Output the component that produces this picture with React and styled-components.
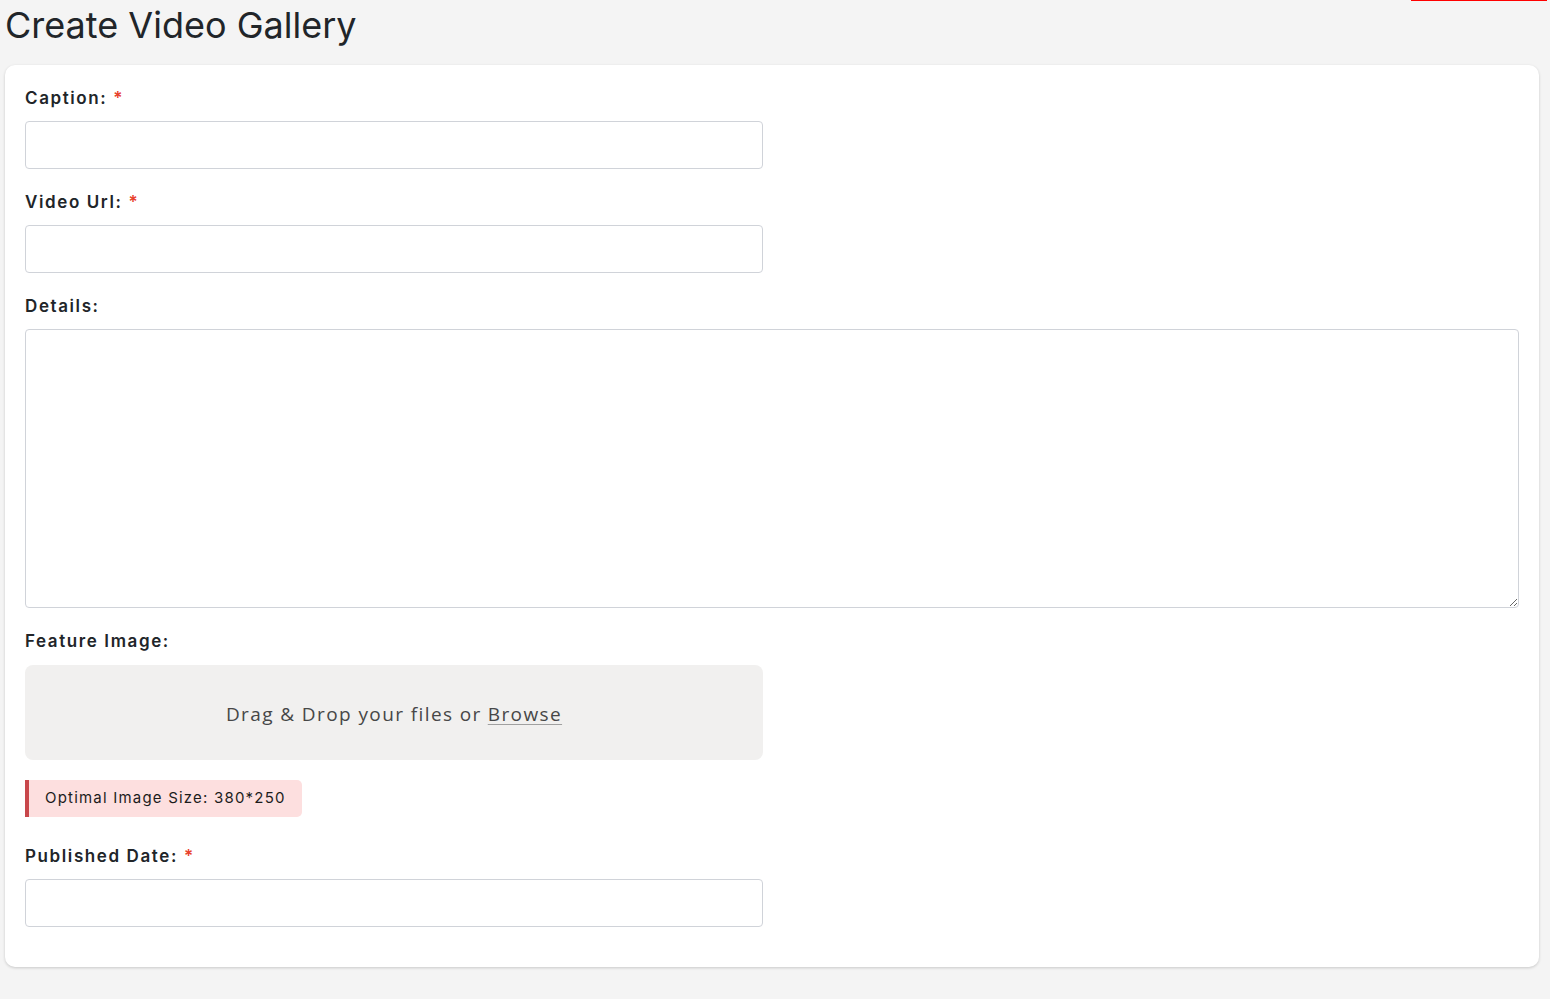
import React from "react";
import styled, { createGlobalStyle } from "styled-components";

const GlobalStyle = createGlobalStyle`
  html, body {
    margin: 0;
    padding: 0;
    background: #f4f4f4;
    font-family: Inter, "Noto Sans", sans-serif;
    color: #212529;
  }
  * { box-sizing: border-box; }
`;

const Page = styled.div`
  position: relative;
  padding: 0 11px 32px 5px;
`;

const TopBar = styled.div`
  position: absolute;
  top: 0;
  left: 1411px;
  width: 136px;
  height: 1px;
  background: #ff0000;
`;

const Title = styled.h1`
  margin: 0;
  padding: 3px 0 0 0;
  height: 65px;
  font-size: 36px;
  font-weight: 400;
  line-height: 44px;
  color: #212529;
`;

const Card = styled.div`
  background: #ffffff;
  border-radius: 10px;
  box-shadow: 0 1px 3px rgba(0, 0, 0, 0.18);
  padding: 20px 20px 40px 20px;
`;

const Field = styled.div`
  display: flex;
  flex-direction: column;
  margin-bottom: ${(p) => p.$gap ?? 20}px;
`;

const Label = styled.label`
  font-size: 17px;
  font-weight: 600;
  letter-spacing: 1.6px;
  line-height: 22px;
  padding-top: 2px;
  color: #212529;
  margin-bottom: 12px;
`;

const Req = styled.span`
  color: #e8412c;
  margin-left: 6px;
`;

const Input = styled.input`
  width: ${(p) => p.$width || "738px"};
  height: 48px;
  border: 1px solid #d0d3d9;
  border-radius: 4px;
  padding: 0 12px;
  font-size: 16px;
  font-family: inherit;
  outline: none;
`;

const TextArea = styled.textarea`
  width: 100%;
  height: 279px;
  border: 1px solid #d0d3d9;
  border-radius: 4px;
  padding: 10px 12px;
  font-size: 16px;
  font-family: inherit;
  outline: none;
  resize: vertical;
`;

const DropZone = styled.div`
  width: 738px;
  height: 95px;
  margin-top: 1px;
  background: #f1f0ef;
  border-radius: 8px;
  display: flex;
  align-items: center;
  justify-content: center;
  font-family: "Open Sans", sans-serif;
  font-size: 19px;
  letter-spacing: 1.4px;
  color: #474747;
  padding-top: 2px;
`;

const Browse = styled.span`
  text-decoration: underline;
  text-decoration-color: #a0a0a0;
  text-underline-offset: 3px;
  margin-left: 6px;
`;

const Note = styled.div`
  display: inline-flex;
  align-items: center;
  align-self: flex-start;
  height: 37px;
  margin-top: 20px;
  padding: 0 16px 2px 16px;
  background: #fddfdf;
  border-left: 4px solid #c8474b;
  border-radius: 0 5px 5px 0;
  font-size: 15px;
  letter-spacing: 1.2px;
  color: #1c1c1c;
`;

export default function App() {
  return (
    <>
      <GlobalStyle />
      <Page>
        <TopBar />
        <Title>Create Video Gallery</Title>
        <Card>
          <Field>
            <Label>
              Caption:<Req>*</Req>
            </Label>
            <Input type="text" />
          </Field>
          <Field>
            <Label>
              Video Url:<Req>*</Req>
            </Label>
            <Input type="text" />
          </Field>
          <Field>
            <Label>Details:</Label>
            <TextArea />
          </Field>
          <Field $gap={26}>
            <Label>Feature Image:</Label>
            <DropZone>
              Drag &amp; Drop your files or<Browse>Browse</Browse>
            </DropZone>
            <Note>Optimal Image Size: 380*250</Note>
          </Field>
          <Field $gap={0}>
            <Label>
              Published Date:<Req>*</Req>
            </Label>
            <Input type="text" />
          </Field>
        </Card>
      </Page>
    </>
  );
}
